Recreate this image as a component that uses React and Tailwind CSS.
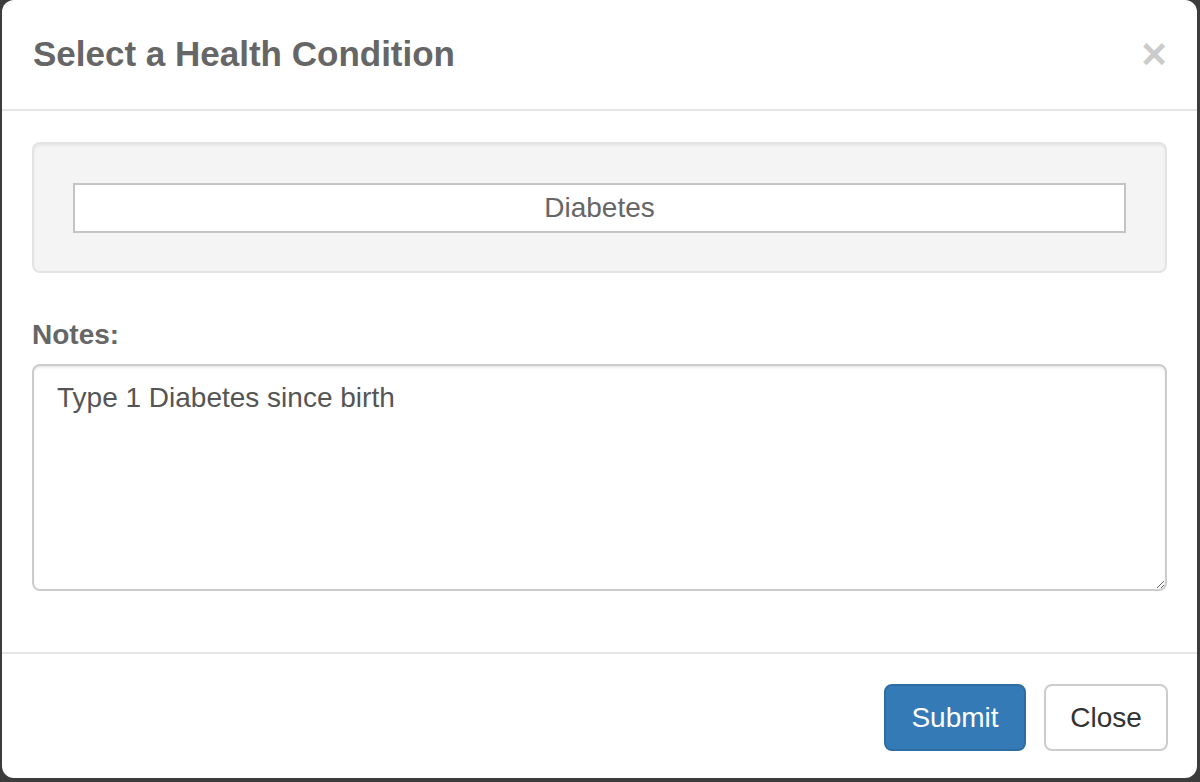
import React, { useState } from 'react';

const font = { fontFamily: '"Liberation Sans", Arial, sans-serif' };

const App = () => {
    const [condition] = useState('Diabetes');
    const [notes, setNotes] = useState('Type 1 Diabetes since birth');

    return (
        <div className="w-[1200px] h-[782px] bg-[#3c3c3c] overflow-hidden" style={font}>
            <div className="ml-[2px] w-[1195px] h-[778px] bg-white rounded-[12px] flex flex-col overflow-hidden">

                {/* header */}
                <div className="h-[111px] shrink-0 border-b-2 border-[#e5e5e5] flex items-center justify-between pl-[31px] pr-[30px]">
                    <h4 className="text-[35px] font-bold text-[#666] leading-none -mt-[2px]">
                        Select a Health Condition
                    </h4>
                    <button className="text-[44px] font-bold leading-none text-black opacity-20 -mt-[2px]">
                        ×
                    </button>
                </div>

                {/* body */}
                <div className="px-[30px] pt-[31px]">
                    <div className="h-[131px] bg-[#f4f4f4] border-2 border-[#e3e3e3] rounded-[8px] shadow-[inset_0_2px_2px_rgba(0,0,0,0.05)] px-[39px] pt-[39px]">
                        <div className="h-[50px] bg-white border-2 border-[#c4c4c4] flex items-center justify-center text-[28px] text-[#666]">
                            {condition}
                        </div>
                    </div>

                    <label className="block mt-[42px] mb-[9px] text-[28px] leading-[40px] font-bold text-[#666]">
                        Notes:
                    </label>
                    <textarea
                        value={notes}
                        onChange={(e) => setNotes(e.target.value)}
                        className="block w-full h-[227px] border-2 border-[#ccc] rounded-[8px] shadow-[inset_0_2px_2px_rgba(0,0,0,0.075)] px-[23px] py-[12px] text-[28px] leading-[40px] text-[#555] outline-none"
                        style={font}
                    />
                </div>

                {/* footer */}
                <div className="mt-[61px] border-t-2 border-[#e5e5e5] flex-1 flex justify-end items-start gap-[18px] pt-[30px] pr-[29px]">
                    <button className="h-[67px] w-[142px] bg-[#337ab7] border-2 border-[#2e6da4] rounded-[8px] text-white text-[28px]">
                        Submit
                    </button>
                    <button className="h-[67px] w-[124px] bg-white border-2 border-[#ccc] rounded-[8px] text-[#333] text-[28px]">
                        Close
                    </button>
                </div>

            </div>
        </div>
    );
};

export default App;
